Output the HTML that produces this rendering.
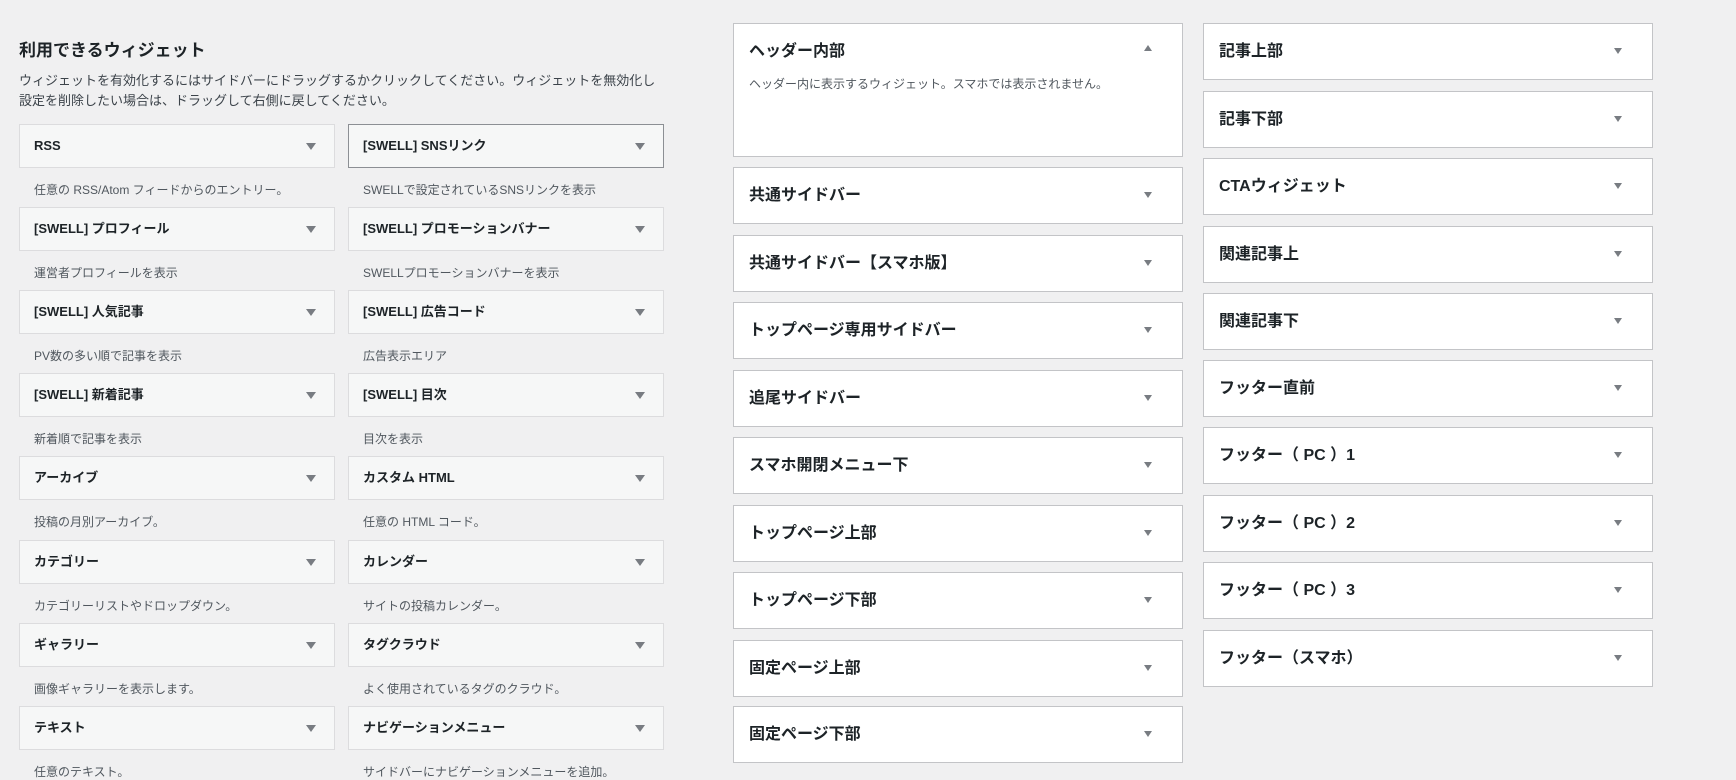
<!DOCTYPE html>
<html><head><meta charset="utf-8"><style>
*{box-sizing:border-box;margin:0;padding:0}
body{width:1736px;height:778px;overflow:hidden;background:#f0f0f1;font-family:"Liberation Sans","Noto Sans CJK JP",sans-serif;color:#1d2327;position:relative}
h2{position:absolute;left:19px;top:36px;font-size:17px;font-weight:700}
.desc{position:absolute;left:19px;top:71px;font-size:13px;line-height:20px;color:#3c434a;width:650px}
.w{position:absolute;width:316px;height:44px;background:#f6f7f7;border:1px solid #dcdcde;font-size:13px;font-weight:700;padding:0 14px;line-height:42px}
.w.sel{border-color:#8c8f94}
.w::after,.s::after{content:"";position:absolute;right:18px;top:18px;border-left:5px solid transparent;border-right:5px solid transparent;border-top:7px solid #787c82}
.d{position:absolute;font-size:12px;color:#50575e}
.s{position:absolute;width:450px;height:57px;background:#fff;border:1px solid #c3c4c7;font-size:16px;font-weight:700;padding:0 15px;line-height:56px}
.s::after{right:30px;top:24px;border-top-width:6px;border-left-width:4px;border-right-width:4px}
.s.up::after{border-top:0;border-bottom:6px solid #787c82;top:21px}
.s .sd{position:absolute;left:15px;top:52px;font-size:12px;font-weight:400;color:#50575e;line-height:16px}
</style></head><body>
<h2>利用できるウィジェット</h2>
<div class="desc">ウィジェットを有効化するにはサイドバーにドラッグするかクリックしてください。ウィジェットを無効化し<br>設定を削除したい場合は、ドラッグして右側に戻してください。</div>

<div class="w" style="left:19px;top:124px">RSS</div>
<div class="w sel" style="left:348px;top:124px">[SWELL] SNSリンク</div>
<div class="d" style="left:34px;top:181px">任意の RSS/Atom フィードからのエントリー。</div>
<div class="d" style="left:363px;top:181px">SWELLで設定されているSNSリンクを表示</div>

<div class="w" style="left:19px;top:207px">[SWELL] プロフィール</div>
<div class="w" style="left:348px;top:207px">[SWELL] プロモーションバナー</div>
<div class="d" style="left:34px;top:264px">運営者プロフィールを表示</div>
<div class="d" style="left:363px;top:264px">SWELLプロモーションバナーを表示</div>

<div class="w" style="left:19px;top:290px">[SWELL] 人気記事</div>
<div class="w" style="left:348px;top:290px">[SWELL] 広告コード</div>
<div class="d" style="left:34px;top:347px">PV数の多い順で記事を表示</div>
<div class="d" style="left:363px;top:347px">広告表示エリア</div>

<div class="w" style="left:19px;top:373px">[SWELL] 新着記事</div>
<div class="w" style="left:348px;top:373px">[SWELL] 目次</div>
<div class="d" style="left:34px;top:430px">新着順で記事を表示</div>
<div class="d" style="left:363px;top:430px">目次を表示</div>

<div class="w" style="left:19px;top:456px">アーカイブ</div>
<div class="w" style="left:348px;top:456px">カスタム HTML</div>
<div class="d" style="left:34px;top:513px">投稿の月別アーカイブ。</div>
<div class="d" style="left:363px;top:513px">任意の HTML コード。</div>

<div class="w" style="left:19px;top:540px">カテゴリー</div>
<div class="w" style="left:348px;top:540px">カレンダー</div>
<div class="d" style="left:34px;top:597px">カテゴリーリストやドロップダウン。</div>
<div class="d" style="left:363px;top:597px">サイトの投稿カレンダー。</div>

<div class="w" style="left:19px;top:623px">ギャラリー</div>
<div class="w" style="left:348px;top:623px">タグクラウド</div>
<div class="d" style="left:34px;top:680px">画像ギャラリーを表示します。</div>
<div class="d" style="left:363px;top:680px">よく使用されているタグのクラウド。</div>

<div class="w" style="left:19px;top:706px">テキスト</div>
<div class="w" style="left:348px;top:706px">ナビゲーションメニュー</div>
<div class="d" style="left:34px;top:763px">任意のテキスト。</div>
<div class="d" style="left:363px;top:763px">サイドバーにナビゲーションメニューを追加。</div>

<div class="s up" style="left:733px;top:23px;height:134px">ヘッダー内部<div class="sd">ヘッダー内に表示するウィジェット。スマホでは表示されません。</div></div>
<div class="s" style="left:733px;top:167px">共通サイドバー</div>
<div class="s" style="left:733px;top:235px">共通サイドバー【スマホ版】</div>
<div class="s" style="left:733px;top:302px">トップページ専用サイドバー</div>
<div class="s" style="left:733px;top:370px">追尾サイドバー</div>
<div class="s" style="left:733px;top:437px">スマホ開閉メニュー下</div>
<div class="s" style="left:733px;top:505px">トップページ上部</div>
<div class="s" style="left:733px;top:572px">トップページ下部</div>
<div class="s" style="left:733px;top:640px">固定ページ上部</div>
<div class="s" style="left:733px;top:706px">固定ページ下部</div>

<div class="s" style="left:1203px;top:23px">記事上部</div>
<div class="s" style="left:1203px;top:91px">記事下部</div>
<div class="s" style="left:1203px;top:158px">CTAウィジェット</div>
<div class="s" style="left:1203px;top:226px">関連記事上</div>
<div class="s" style="left:1203px;top:293px">関連記事下</div>
<div class="s" style="left:1203px;top:360px">フッター直前</div>
<div class="s" style="left:1203px;top:427px">フッター（ PC ）1</div>
<div class="s" style="left:1203px;top:495px">フッター（ PC ）2</div>
<div class="s" style="left:1203px;top:562px">フッター（ PC ）3</div>
<div class="s" style="left:1203px;top:630px">フッター（スマホ）</div>
</body></html>
